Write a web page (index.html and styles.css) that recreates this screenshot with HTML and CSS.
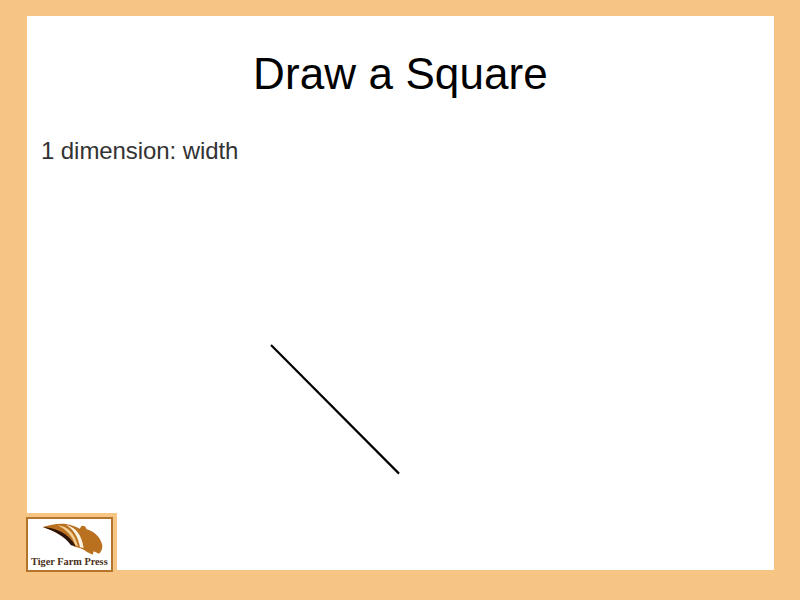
FILE: index.html
```html
<!DOCTYPE html>
<html lang="en">
<head>
<meta charset="utf-8">
<title>Draw a Square</title>
<link rel="stylesheet" href="styles.css">
</head>
<body>
<main class="slide">
  <h1 class="title">Draw a Square</h1>
  <p class="subtitle">1 dimension: width</p>
  <svg class="diagonal" width="132" height="132" viewBox="0 0 132 132" aria-hidden="true">
    <line x1="2" y1="2" x2="130" y2="130.6" stroke="#000" stroke-width="2.2"/>
  </svg>
  <div class="logo-mat">
    <div class="logo">
      <svg class="logo-mark" width="64" height="34" viewBox="50 30 192 102" aria-hidden="true">
        <path d="M55 45 C80 38 100 33 125 36 C145 39 158 46 166 50 L172 41 L182 43 L187 52 C210 58 228 75 234 100 C235 112 230 120 224 125 L208 118 L205 128 L188 120 C180 112 165 106 150 104 C130 80 95 58 55 45Z" fill="#b9701f"/>
        <path d="M55 45 C95 48 132 62 154 103 L140 100 C122 75 95 58 55 45Z" fill="#2c1408"/>
        <path d="M100 40 C130 43 150 62 161 103 L153 100 C145 72 125 52 100 40Z" fill="#f2cf94"/>
        <path d="M125 38 C155 46 172 68 178 108 L167 106 C162 75 148 52 125 38Z" fill="#fdf5e4"/>
      </svg>
      <span class="logo-text">Tiger Farm Press</span>
    </div>
  </div>
</main>
</body>
</html>
```
FILE: styles.css
```css
* { box-sizing: border-box; }
html, body { margin: 0; height: 100%; }
body {
  background: #f6c483;
  padding: 16px 26px 30px 27px;
  overflow: hidden;
}
.slide {
  position: relative;
  height: 100%;
  background: #fff;
  display: flex;
  flex-direction: column;
  font-family: "Liberation Sans", Arial, sans-serif;
}
.title {
  margin: 32px 0 0;
  text-align: center;
  font-size: 44px;
  font-weight: 400;
  line-height: 52px;
  letter-spacing: 0.1px;
  color: #000;
}
.subtitle {
  margin: 37px 0 0 14px;
  font-size: 24px;
  line-height: 28px;
  letter-spacing: -0.08px;
  color: #333;
}
.diagonal {
  position: absolute;
  left: 242px;
  top: 327px;
}
.logo-mat {
  position: absolute;
  left: 0;
  bottom: 0;
  width: 90px;
  height: 57px;
  background: #f6c483;
}
.logo {
  position: absolute;
  left: -1px;
  top: 4px;
  width: 87px;
  height: 55px;
  background: #fff;
  border: 2px solid #b3742c;
  display: flex;
  flex-direction: column;
  align-items: flex-start;
}
.logo-mark {
  margin: 3px 0 0 13px;
  flex: none;
}
.logo-text {
  position: absolute;
  left: 3px;
  bottom: 3px;
  font-family: "Liberation Serif", serif;
  font-weight: 700;
  font-size: 10.3px;
  line-height: 11px;
  white-space: nowrap;
  color: #4a3020;
}
```
